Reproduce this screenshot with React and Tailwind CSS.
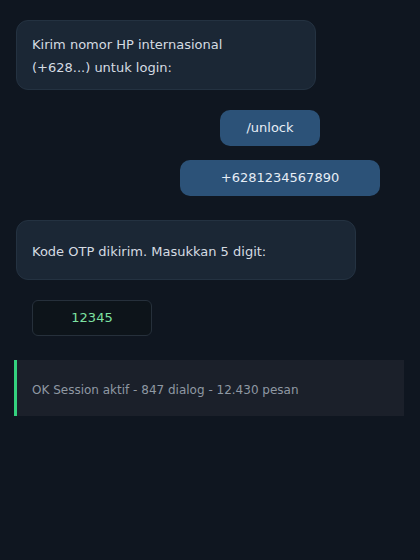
export default function App() {
  return (
    <div
      className="min-h-[560px] w-[420px] bg-[#0f1620] pt-5 text-[13px] text-[#d5dbe2]"
      style={{ fontFamily: '"DejaVu Sans", sans-serif' }}
    >
      <div className="ml-4 w-[300px] rounded-xl border border-[#243241] bg-[#1b2735] pb-[10px] pl-[15px] pr-4 pt-[12px] leading-[23px]">
        Kirim nomor HP internasional
        <br />
        (+628...) untuk login:
      </div>

      <div className="mt-5 flex justify-end pr-[100px]">
        <div className="flex h-9 w-[100px] items-center justify-center rounded-[10px] bg-[#2c5278] text-[#e6edf5]">
          /unlock
        </div>
      </div>

      <div className="mt-[14px] flex justify-end pr-10">
        <div className="flex h-9 w-[200px] items-center justify-center rounded-[10px] bg-[#2c5278] text-[#e6edf5]">
          +6281234567890
        </div>
      </div>

      <div className="ml-4 mt-6 flex h-[60px] w-[340px] items-center rounded-xl border border-[#243241] bg-[#1b2735] pl-[15px] pr-4 pt-1">
        Kode OTP dikirim. Masukkan 5 digit:
      </div>

      <div className="ml-8 mt-5 flex h-9 w-[120px] items-center justify-center rounded-md border border-[#26303b] bg-[#0d141a] text-[#7ee2a2]">
        12345
      </div>

      <div className="ml-[14px] mt-6 flex h-14 w-[390px] items-center border-l-[3px] border-[#34d17e] bg-[#1b202a] pl-[15px] pt-1 text-[12px] text-[#8f98a3]">
        OK Session aktif - 847 dialog - 12.430 pesan
      </div>
    </div>
  )
}
